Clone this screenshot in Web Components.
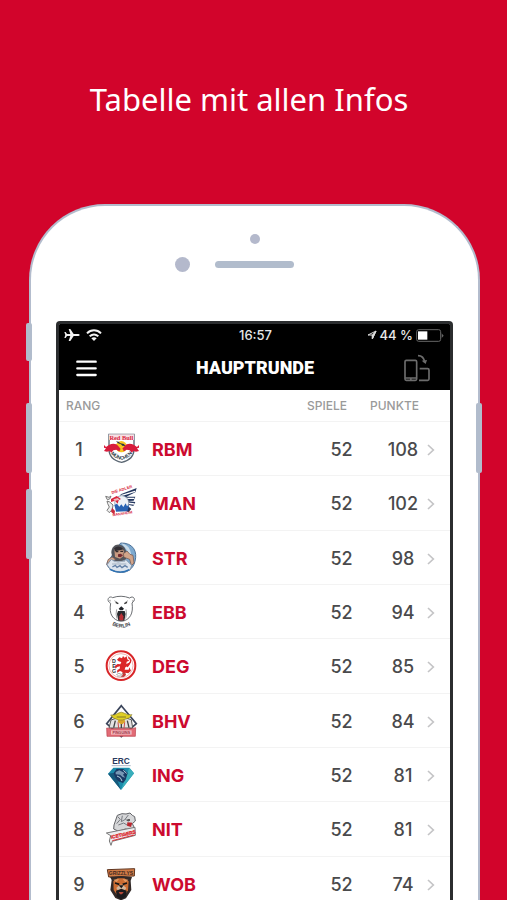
<!DOCTYPE html>
<html lang="de">
<head>
<meta charset="utf-8">
<meta name="viewport" content="width=device-width, initial-scale=1">
<title>Tabelle mit allen Infos</title>
<style>
  body { margin: 0; background: #d2042b; }
</style>
</head>
<body>
<promo-page>
  <span slot="title">Tabelle mit allen Infos</span>
  <phone-frame>
    <status-bar></status-bar>
    <app-bar>Hauptrunde</app-bar>
    <standings-table></standings-table>
  </phone-frame>
</promo-page>

<script>
const define = (name, html, setup) => customElements.define(name, class extends HTMLElement {
  constructor() {
    super();
    const root = this.attachShadow({ mode: 'open' });
    root.innerHTML = html;
    if (setup) setup(this, root);
  }
});

define('promo-page', `
  <style>
    :host { display: flex; flex-direction: column; height: 100vh; overflow: hidden; background: #d2042b; font-family: Inter, "Liberation Sans", sans-serif; }
    h1 { flex: none; box-sizing: border-box; height: 204px; margin: 0; padding: 76px 9px 0 0; text-align: center; color: #fff; font: 400 31px/46px "Noto Sans", sans-serif; }
    main { flex: 1 0 auto; padding: 0 27px 0 29px; }
  </style>
  <h1><slot name="title"></slot></h1>
  <main><slot></slot></main>`);

define('phone-frame', `
  <style>
    :host { display: block; position: relative; }
    .body { position: relative; background: #fff; border: 2px solid #b3bccd; border-bottom: 0; border-radius: 76px 76px 0 0; padding: 28px 25px 0 25px; }
    .sensor { width: 10px; height: 10px; margin: 0 auto; border-radius: 50%; background: #b4b9cc; }
    .front { display: grid; grid-template-columns: 1fr auto 1fr; column-gap: 25px; align-items: center; margin: 13px 0 49px; }
    .camera { justify-self: end; width: 15px; height: 15px; border-radius: 50%; background: #b4b9cc; }
    .speaker { width: 79px; height: 7px; border-radius: 4px; background: #b1bccc; }
    .screen { background: #fff; border: 3px solid #2b2d2f; border-bottom: 0; border-radius: 4px 4px 0 0; overflow: hidden; }
    .key { position: absolute; width: 6px; height: 70px; border-radius: 2px; background: #b1bccc; left: -3px; }
    .mute { top: 119px; height: 38px; }
    .up { top: 199px; }
    .down { top: 285px; }
    .power { top: 199px; left: auto; right: -2px; }
  </style>
  <div class="body">
    <div class="sensor"></div>
    <div class="front"><div class="camera"></div><div class="speaker"></div></div>
    <div class="screen"><slot></slot></div>
  </div>
  <div class="key mute"></div><div class="key up"></div><div class="key down"></div><div class="key power"></div>`);

define('status-bar', `
  <style>
    :host { display: grid; grid-template-columns: 1fr auto 1fr; align-items: center; height: 22px; padding: 0 6px 0 5px; background: #000; color: #e8e8e8; font-size: 13px; line-height: 16px; font-weight: 500; }
    div { display: flex; align-items: center; }
    .left { gap: 6px; }
    .right { justify-content: flex-end; gap: 3px; }
    time { padding-left: 3px; }
    svg { display: block; }
  </style>
  <div class="left">
    <svg width="16" height="14" viewBox="0 0 48 42" fill="#f2f2f2"><path d="M47 21c0 2-3 3-6 3H29L19 39h-5l5-15H9l-4 6H1l3-9-3-9h4l4 6h10L14 3h5l10 15h12c3 0 6 1 6 3z"/></svg>
    <svg width="16" height="12" viewBox="0 0 48 36" fill="none" stroke="#f2f2f2" stroke-width="6"><path d="M3 13c12-12 30-12 42 0M11 22c8-7 18-7 26 0"/><path d="M24 36l-8-8c5-4 11-4 16 0z" fill="#f2f2f2" stroke="none"/></svg>
  </div>
  <time>16:57</time>
  <div class="right">
    <svg width="10" height="10" viewBox="0 0 30 30" fill="none" stroke="#ddd" stroke-width="3" stroke-linejoin="round"><path d="M27 3L16 27v-12H3z"/><path d="M27 3L16 15v12z" fill="#ddd"/></svg>
    <span>44 %</span>
    <svg width="28" height="13" viewBox="0 0 84 39"><rect x="2" y="2" width="72" height="35" rx="6" fill="none" stroke="#666" stroke-width="3"/><path d="M77 13l6 7-6 7z" fill="#666"/><rect x="6" y="7" width="28" height="25" fill="#fff"/></svg>
  </div>`);

define('app-bar', `
  <style>
    :host { display: grid; grid-template-columns: 1fr auto 1fr; align-items: center; height: 44px; padding: 0 20px 0 17px; background: #000; color: #fff; }
    h2 { margin: 0; padding-left: 4px; font: 900 18px/24px Roboto, sans-serif; text-transform: uppercase; }
    button { padding: 0; border: 0; background: none; cursor: pointer; }
    button:first-child { justify-self: start; }
    button:last-child { justify-self: end; }
    svg { display: block; }
  </style>
  <button aria-label="Menü"><svg width="21" height="17" viewBox="0 0 63 51" stroke="#fff" stroke-width="7" stroke-linecap="round"><path d="M4 5h55M4 25h55M4 45h55"/></svg></button>
  <h2><slot></slot></h2>
  <button aria-label="Gerät drehen"><svg width="26" height="28" viewBox="0 0 78 84" fill="none" stroke="#6c6c6c" stroke-width="5"><rect x="3" y="19" width="35" height="60" rx="4"/><path d="M3 72h35M18 76h5M47 44h24q4 0 4 4v27q0 4-4 4H45M42 5q17 0 20 20"/><path d="M53 20l16-2-4 12z" fill="#6c6c6c" stroke="none"/></svg></button>`);

const crests = {
  RBM: `<path d="M18 10h75v44c0 20-13 35-37 40-25-5-38-20-38-40z" fill="#fff" stroke="#5a6672" stroke-width="4"/>
    <path d="M18 10h75v17H18z" fill="#f8dfe4"/><circle cx="55" cy="47" r="17" fill="#f7c51e"/>
    <text x="55" y="27" text-anchor="middle" font-family="Liberation Serif, serif" font-weight="700" font-size="19" fill="#d81f3e">Red Bull</text>
    <path d="M39 31l8 1 5 5 11 2 4 6-9-1-4-4-9-3z" fill="#283646"/>
    <path d="M3 42l6 6 10-7c9-5 22-4 26 3l10 12-7 5-8-5-9 2-6 7-5-5-8 2-9-2 6-8-6-2z" fill="#d81c3c"/>
    <path d="M108 42l-6 6-10-7c-9-5-22-4-26 3L55 56l8 5 8-5 9 2 6 7 5-5 8 2 9-2-6-8 6-2z" fill="#d81c3c"/>
    <path d="M50 58l6-7 6 7-6 5z" fill="#f7c51e"/><path id="rbm" d="M24 69Q55 103 87 68" fill="none"/>
    <text font-family="Liberation Sans, sans-serif" font-weight="700" font-size="15" fill="#303b48"><textPath href="#rbm" startOffset="50%" text-anchor="middle">MÜNCHEN</textPath></text>`,
  MAN: `<path d="M53 28L101 9l-4 13-27 13h27l-5 12-21 1 26 3-6 12-22-5 16 14-9 10-25-15z" fill="#23365f"/>
    <path d="M54 32l42-13M64 40l30 0M68 54l26 3" stroke="#fff" stroke-width="4"/>
    <circle cx="56" cy="53" r="21" fill="#edf1f7" stroke="#7c8aa0" stroke-width="2"/>
    <path d="M34 60l5 20 34-1 6-20-7 5-4-9-7 11-6-8-6 7-7-9z" fill="#2862b3"/>
    <path d="M24 42l17-9 13 9-7 4-3 10-8-9-12 4z" fill="#d7263d"/><path d="M31 43l13-4 6 5-15 4z" fill="#f1b8bb"/>
    <path d="M8 34l10 3 6-4-4 9-7 2zM12 48l8 3 10 9-2 13-9 10-7-7 7-10-5-10z" fill="#eee" stroke="#777" stroke-width="3"/>
    <path d="M27 68l9 10-2 11-10-9z" fill="#c92a3c"/>
    <text x="27" y="27" transform="rotate(-17 27 27)" font-family="Liberation Sans, sans-serif" font-weight="700" font-size="12" fill="#d7263d">DIE ADLER</text>
    <text x="29" y="94" transform="rotate(-9 29 94)" font-family="Liberation Sans, sans-serif" font-weight="700" font-size="11" fill="#d7263d">MANNHEIM</text>`,
  STR: `<path d="M53 9c38-1 51 26 43 55-6 25-26 36-49 33C27 95 13 84 12 69z" fill="#7eaad0" stroke="#4e7298" stroke-width="3"/>
    <path d="M55 10c28 5 31 31 30 51L73 32z" fill="#c9dbe8"/>
    <path d="M25 38c0-24 24-33 40-15l7 16-4 22-17 7-21-8z" fill="#54555b"/>
    <path d="M34 27c9-8 24-5 28 5l1 15-12 9-15-5z" fill="#c99a81"/><path d="M33 25q14-12 29 3l-8 2-18 4z" fill="#332f34"/>
    <path d="M38 35h8M52 34h8" stroke="#332b2c" stroke-width="4"/><path d="M45 43l8-2 7 5-7 6-8-2z" fill="#742b31"/>
    <path d="M61 41l11-8 9 10 9 3 3 23-8 8-5-19-17-6zM15 59l12-8 12 7-11 5-8 9-9 3z" fill="#d2a58a" stroke="#6b4e48" stroke-width="2"/>
    <path d="M25 58q19 15 44 1l17 17-4 13q-29 15-61-2L12 74z" fill="#dce4ee" stroke="#7d91a8" stroke-width="3"/>
    <path d="M32 65l34-1M27 72l43 0" stroke="#a5b1bf" stroke-width="3"/><path d="M28 81l9-5 5 6 9-5 6 6 9-6 8 5" fill="none" stroke="#627fa5" stroke-width="4"/>
    <path d="M20 88q31 16 59 1" stroke="#2d72b5" stroke-width="4" fill="none"/>`,
  EBB: `<path d="M29 11q25-9 51 1c9-8 19 2 12 10l-5 5c5 31-6 52-32 55-26-3-38-22-32-54-15-7-6-25 6-17z" fill="#fff" stroke="#6a6d71" stroke-width="3"/>
    <path d="M23 19q-5-2-2 4M88 19q5-1 1 5M34 20l8 5M75 20l-8 5M41 46q-4 15 1 28M69 46q4 15-1 28" fill="none" stroke="#777" stroke-width="2"/>
    <path d="M38 25l8 4M72 25l-8 4" stroke="#333" stroke-width="4"/><path d="M47 44l8-7 8 7-4 5h-8z" fill="#22252a"/>
    <path d="M45 51h20l3 9-4 20H46l-4-20z" fill="#292a2e"/><path d="M49 67l6-10 6 10v12H49z" fill="#ba3036"/>
    <path id="ebb" d="M21 89Q55 113 89 89" fill="none"/><text font-family="Liberation Sans, sans-serif" font-weight="700" font-size="16" fill="#45484d"><textPath href="#ebb" startOffset="50%" text-anchor="middle">BERLIN</textPath></text>`,
  DEG: `<circle cx="54" cy="53" r="43" fill="#fff" stroke="#d82528" stroke-width="6"/><circle cx="54" cy="53" r="36" fill="none" stroke="#e88b8b" stroke-width="2"/>
    <text x="33" y="45" text-anchor="middle" font-family="Liberation Sans, sans-serif" font-weight="700" font-size="16" fill="#303236">D</text>
    <text x="33" y="60" text-anchor="middle" font-family="Liberation Sans, sans-serif" font-weight="700" font-size="16" fill="#303236">E</text>
    <text x="33" y="75" text-anchor="middle" font-family="Liberation Sans, sans-serif" font-weight="700" font-size="16" fill="#303236">G</text>
    <path d="M49 28l8 3 3-7 5 5 6-4 2 9 6 4-8 3-1 7 13-6-4 10-12 6-2 7 12 0 2-7 5 10-8 8-9-2 2 7-7 6-9-1 6-5-1-9-7-3-9 5 1-8 7-4 1-7-9 2-4 5-3-8 9-6 8 1 3-7-8-2-5-5z" fill="#db2728"/>
    <path d="M76 28q13 9 2 20l-5 9" fill="none" stroke="#db2728" stroke-width="4"/><path d="M40 80q7-7 15-1 7-6 12 0M42 84h22" fill="none" stroke="#777" stroke-width="2"/>`,
  BHV: `<path d="M55 8L100 62 55 101 11 62z" fill="#fff" stroke="#3b455b" stroke-width="5"/>
    <path d="M24 51q31-14 61-1l4 25H18z" fill="#e4e2e2" stroke="#555" stroke-width="3"/><path d="M47 48l8-5 9 5 3 9-11 8-12-8z" fill="#d9a52c"/>
    <path d="M37 53l-5 21M73 53l5 21M55 63v12" stroke="#444" stroke-width="4"/><path d="M45 58l2 18M65 58l-2 18" stroke="#c84f4c" stroke-width="3"/>
    <path d="M23 36q15 2 21-5 11-7 21 0 9 7 22 4l-9 10-20 6H47l-16-6z" fill="#dfcf24" stroke="#8c812c" stroke-width="2"/><path d="M41 42h28" stroke="#82792a" stroke-width="3"/>
    <path d="M11 75l12 2h64l11-3-1 26H12z" fill="#e26b76" stroke="#b83f4c" stroke-width="2"/><path d="M24 82h62v13H24z" fill="#f3b9be"/>
    <text x="55" y="93" text-anchor="middle" font-family="Liberation Sans, sans-serif" font-weight="700" font-size="11" fill="#983243">PINGUINS</text>`,
  ING: `<text x="54" y="20" text-anchor="middle" font-family="Liberation Sans, sans-serif" font-weight="700" font-size="25" fill="#28395e">ERC</text><path d="M26 26h57" stroke="#8090aa" stroke-width="2"/>
    <path d="M31 32h48l14 17-39 50L15 50z" fill="#1a8baa"/><path d="M54 99L79 32l14 17z" fill="#38aebb"/><path d="M54 99L15 50l20-3z" fill="#15597c"/>
    <path d="M32 48l9-13 20 1 13 12-6 20-8 10-15-5-9-13z" fill="#193965"/><path d="M38 45l11-5 16 8-5 5 7 9-8-2-8-7-13-1z" fill="#7898b5"/><path d="M42 57l10 5 5 10M61 40l10 9" fill="none" stroke="#b5d2df" stroke-width="3"/>`,
  NIT: `<path d="M33 42l10-29 14-5 12 1 12-3 7 7 7 4 2 13-9 8 5 10-8 8-18-2-20 7-15-7z" fill="#d6d7d9" stroke="#626367" stroke-width="3"/>
    <path d="M44 17l8 8-11 13M58 14l-3 18 12-7 10 6M46 42l16-6 10 6M76 12l-9 12" fill="none" stroke="#777a80" stroke-width="3"/>
    <path d="M73 34l15 1-4 13-12-4z" fill="#b9272f"/><path d="M73 27h8" stroke="#222" stroke-width="4"/>
    <path d="M10 66l86-17 1 24-69 18-4 12-5-13 4-16z" fill="#ecedef" stroke="#777" stroke-width="3"/>
    <text x="25" y="83" transform="rotate(-12 25 83)" font-family="Liberation Sans, sans-serif" font-weight="700" font-size="14" fill="#dc3034" stroke="#dc3034">ICETIGERS</text><path d="M28 89l66-17" stroke="#dc3034" stroke-width="3"/>`,
  WOB: `<path d="M13 11l82-3-1 22-77 3z" fill="#d17b46" stroke="#60351e" stroke-width="3"/>
    <text x="54" y="26" text-anchor="middle" font-family="Liberation Sans, sans-serif" font-weight="700" font-size="15" fill="#422920">GRIZZLYS</text>
    <path d="M26 42l-5-9 13-1 20-2 20 2 13 1-4 11 2 28-16 25-15 6-17-7-15-24z" fill="#332a28"/>
    <path d="M31 46l13-9h20l13 9-2 27-12 17H44L32 72z" fill="#cc6d32"/><path d="M31 41l10 8 7-10M76 41l-9 8-8-10" fill="#e29a64"/>
    <path d="M36 51l13 4M72 51l-13 4" stroke="#161616" stroke-width="5"/><path d="M40 66l10-10h9l11 10-7 10H46z" fill="#d1b69d"/><path d="M47 58h15l-7 9z" fill="#171719"/>
    <path d="M39 74l16-6 16 6-3 18-14 8-13-8z" fill="#1d1b1d"/><path d="M47 78h15l-5 7h-6z" fill="#b64938"/>`
};

define('team-crest', `
  <style>:host { display: block; width: 36px; height: 36px; } svg { display: block; }</style>
  <svg width="36" height="36" viewBox="0 0 108 108" aria-hidden="true"></svg>`,
  (host, root) => {
    root.querySelector('svg').innerHTML = crests[host.getAttribute('team')] || '';
  });

const standings = [['RBM',108],['MAN',102],['STR',98],['EBB',94],['DEG',85],['BHV',84],['ING',81],['NIT',81],['WOB',74]];

define('standings-table', `
  <style>
    :host { display: block; background: #fff; color: #4a4a4c; }
    table { width: 100%; height: 521px; table-layout: fixed; border-collapse: separate; border-spacing: 0; font-size: 18px; line-height: 24px; font-weight: 500; }
    th, td { padding: 3px 0 0; border-bottom: 1px solid #f3f3f3; text-align: center; }
    thead tr { height: 32px; }
    th { padding-top: 1px; font-size: 12px; line-height: 16px; font-weight: 500; color: #9a9a9a; text-transform: uppercase; text-align: left; }
    th.rank { padding-left: 7px; }
    th.games { text-align: right; padding-right: 22px; }
    th.points { padding-left: 1px; }
    td.games { padding-left: 17px; }
    td.points { padding-left: 18px; }
    td.crest { padding: 1px 0 0 4px; }
    td.team { padding-left: 10px; text-align: left; }
    td.more { padding-left: 8px; }
    a { color: #cc0a2f; font-weight: 700; text-decoration: none; }
    svg, team-crest { display: block; }
  </style>
  <table>
    <colgroup><col style="width:40px"><col style="width:43px"><col><col style="width:72px"><col style="width:50px"><col style="width:31px"></colgroup>
    <thead><tr><th scope="col" colspan="2" class="rank">Rang</th><th></th><th scope="col" class="games">Spiele</th><th scope="col" colspan="2" class="points">Punkte</th></tr></thead>
    <tbody></tbody>
  </table>`,
  (host, root) => {
    root.querySelector('tbody').innerHTML = standings.map(([team, points], i) => `
      <tr><td class="rank">${i + 1}</td><td class="crest"><team-crest team="${team}"></team-crest></td>
      <td class="team"><a href="#${team}">${team}</a></td><td class="games">52</td><td class="points">${points}</td>
      <td class="more"><svg width="8" height="12" viewBox="0 0 24 36" fill="none" stroke="#c4c4c6" stroke-width="5"><path d="M3 3l16 15L3 33"/></svg></td></tr>`).join('');
  });
</script>
</body>
</html>
